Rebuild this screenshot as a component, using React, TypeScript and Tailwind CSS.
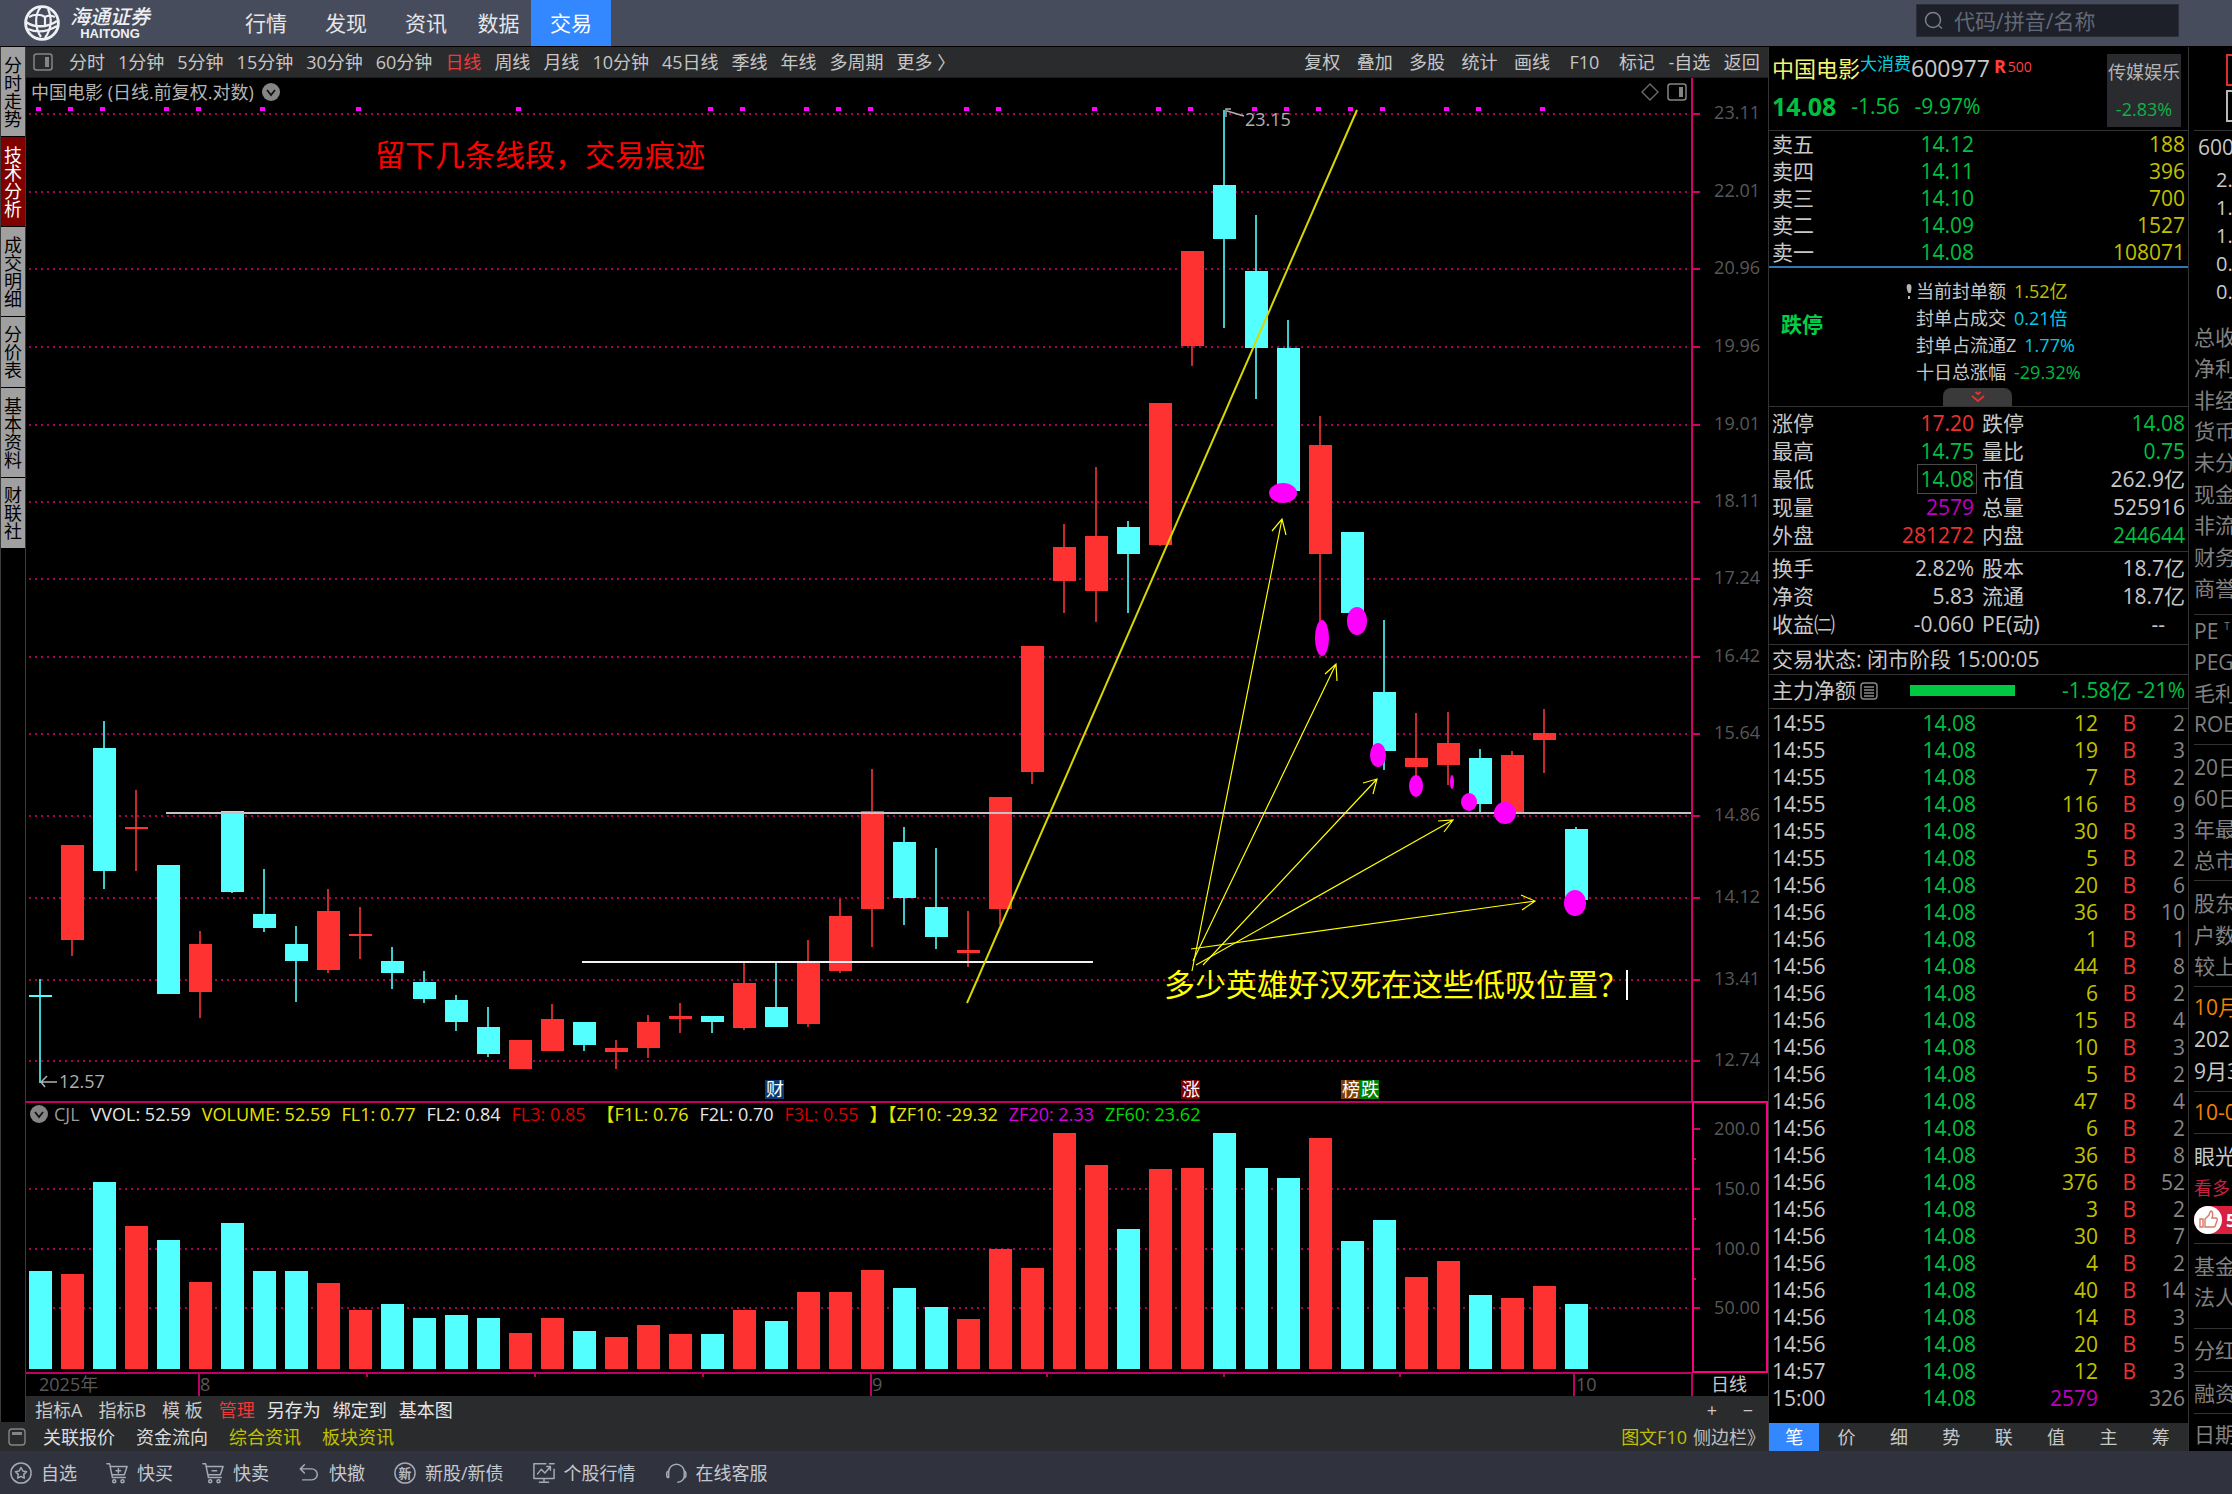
import type { ReactNode } from "react";
import clsx from "clsx";

type Tone = "up" | "down";

/** [tone, high, bodyTop, bodyBottom, low, volumeTop] */
type Bar = [Tone, number, number, number, number, number];

const bars: Bar[] = [
  ["down", 979, 995, 997, 1083, 1271],
  ["up", 845, 845, 940, 956, 1274],
  ["down", 721, 748, 871, 889, 1182],
  ["up", 790, 827, 829, 871, 1226],
  ["down", 865, 865, 994, 994, 1240],
  ["up", 931, 944, 992, 1018, 1282],
  ["down", 811, 811, 892, 893, 1223],
  ["down", 869, 914, 928, 932, 1271],
  ["down", 926, 944, 961, 1002, 1271],
  ["up", 889, 911, 970, 973, 1283],
  ["up", 907, 934, 936, 959, 1310],
  ["down", 947, 961, 973, 989, 1304],
  ["down", 971, 982, 999, 1003, 1318],
  ["down", 995, 1000, 1022, 1031, 1315],
  ["down", 1007, 1027, 1054, 1057, 1318],
  ["up", 1040, 1040, 1069, 1069, 1333],
  ["up", 1004, 1019, 1051, 1051, 1318],
  ["down", 1022, 1022, 1045, 1051, 1331],
  ["up", 1040, 1048, 1052, 1069, 1337],
  ["up", 1015, 1022, 1048, 1058, 1325],
  ["up", 1003, 1016, 1019, 1033, 1334],
  ["down", 1016, 1016, 1022, 1033, 1334],
  ["up", 962, 983, 1028, 1030, 1310],
  ["down", 962, 1007, 1027, 1027, 1321],
  ["up", 940, 962, 1024, 1027, 1292],
  ["up", 899, 916, 971, 973, 1292],
  ["up", 769, 811, 909, 947, 1270],
  ["down", 827, 842, 898, 925, 1288],
  ["down", 848, 907, 937, 949, 1307],
  ["up", 911, 950, 953, 967, 1319],
  ["up", 797, 797, 909, 925, 1249],
  ["up", 646, 646, 772, 784, 1268],
  ["up", 524, 547, 581, 613, 1133],
  ["up", 467, 536, 591, 622, 1165],
  ["down", 521, 527, 554, 613, 1229],
  ["up", 403, 403, 545, 546, 1169],
  ["up", 251, 251, 346, 366, 1168],
  ["down", 110, 185, 239, 328, 1133],
  ["down", 215, 271, 348, 399, 1168],
  ["down", 320, 348, 491, 491, 1178],
  ["up", 416, 445, 554, 640, 1138],
  ["down", 532, 532, 613, 613, 1241],
  ["down", 620, 692, 751, 770, 1220],
  ["up", 713, 758, 767, 777, 1277],
  ["up", 712, 743, 765, 785, 1261],
  ["down", 749, 758, 804, 813, 1295],
  ["up", 751, 755, 813, 813, 1298],
  ["up", 709, 733, 740, 773, 1286],
  ["down", 827, 829, 900, 900, 1304],
];

const barX = (i: number) => 40 + i * 32;
const fill = { up: "#ff3232", down: "#54ffff" };
const wick = { up: "#c82a2a", down: "#40cccc" };

const priceGrid: [number, string][] = [
  [113, "23.11"],
  [191, "22.01"],
  [268, "20.96"],
  [346, "19.96"],
  [424, "19.01"],
  [501, "18.11"],
  [578, "17.24"],
  [656, "16.42"],
  [733, "15.64"],
  [815, "14.86"],
  [897, "14.12"],
  [979, "13.41"],
  [1060, "12.74"],
];

const volumeGrid: [number, string][] = [
  [1129, "200.0"],
  [1189, "150.0"],
  [1249, "100.0"],
  [1308, "50.00"],
];

const eventDots = [0, 1, 2, 4, 5, 7, 10, 15, 21, 22, 24, 25, 26, 29, 30, 33, 35, 36, 38, 39, 40, 41, 42, 44, 45, 47];

/** cx, cy, rx, ry */
const lowMarks = [
  [1283, 493, 14, 10],
  [1322, 638, 7, 18],
  [1357, 621, 10, 14],
  [1378, 755, 8, 12],
  [1416, 786, 7, 11],
  [1452, 782, 2, 7],
  [1469, 802, 8, 9],
  [1505, 813, 11, 11],
  [1575, 903, 11, 13],
];

const arrows = [
  "M1192 971 1282 519M1272 531 1282 519 1286 535",
  "M1193 961 1336 664M1325 674 1336 664 1337 681",
  "M1203 965 1377 779M1363 783 1377 779 1373 794",
  "M1196 965 1453 820M1438 821 1453 820 1444 832",
  "M1191 949 1535 901M1521 895 1535 901 1522 910",
];

const eventTags = [
  { x: 765, text: "财", color: "#0a3a70" },
  { x: 1181, text: "涨", color: "#7d0000" },
  { x: 1341, text: "榜", color: "#803c00" },
  { x: 1360, text: "跌", color: "#008000" },
];

const navItems = ["行情", "发现", "资讯", "数据", "交易"];
const periods = ["分时", "1分钟", "5分钟", "15分钟", "30分钟", "60分钟", "日线", "周线", "月线", "10分钟", "45日线", "季线", "年线", "多周期", "更多 〉"];
const chartTools = ["复权", "叠加", "多股", "统计", "画线", "F10", "标记", "-自选", "返回"];
const sideTabs = ["分时走势", "技术分析", "成交明细", "分价表", "基本资料", "财联社"];
const quoteTabs = ["笔", "价", "细", "势", "联", "值", "主", "筹"];

const legend: [string, string][] = [
  ["CJL", "text-[#9a9a9a]"],
  ["VVOL: 52.59", "text-[#e6e6e6]"],
  ["VOLUME: 52.59", "text-[#e6e600]"],
  ["FL1: 0.77", "text-[#e6e600]"],
  ["FL2: 0.84", "text-[#e6e6e6]"],
  ["FL3: 0.85", "text-[#d80000]"],
  ["【F1L: 0.76", "text-[#e6e600]"],
  ["F2L: 0.70", "text-[#e6e6e6]"],
  ["F3L: 0.55", "text-[#d80000]"],
  ["】【ZF10: -29.32", "text-[#e6e600]"],
  ["ZF20: 2.33", "text-[#d800d8]"],
  ["ZF60: 23.62", "text-[#00d800]"],
];

const asks: [string, string, string][] = [
  ["卖五", "14.12", "188"],
  ["卖四", "14.11", "396"],
  ["卖三", "14.10", "700"],
  ["卖二", "14.09", "1527"],
  ["卖一", "14.08", "108071"],
];

const sealInfo: [string, string, string][] = [
  ["当前封单额", "1.52亿", "text-[#c0c000]"],
  ["封单占成交", "0.21倍", "text-[#00c8e8]"],
  ["封单占流通Z", "1.77%", "text-[#00c8e8]"],
  ["十日总涨幅", "-29.32%", "text-[#00b840]"],
];

const G = "text-[#00c040]";
const R = "text-[#f03030]";
const W = "text-[#c8c8c8]";

const stats: string[][] = [
  ["涨停", "17.20", R, "跌停", "14.08", G],
  ["最高", "14.75", G, "量比", "0.75", G],
  ["最低", "14.08", G, "市值", "262.9亿", W],
  ["现量", "2579", "text-[#c000c0]", "总量", "525916", W],
  ["外盘", "281272", R, "内盘", "244644", G],
];

const fundamentals: string[][] = [
  ["换手", "2.82%", W, "股本", "18.7亿", W],
  ["净资", "5.83", W, "流通", "18.7亿", W],
  ["收益㈡", "-0.060", W, "PE(动)", "--", W],
];

const ticks: [string, number, number][] = [
  ["14:55", 12, 2],
  ["14:55", 19, 3],
  ["14:55", 7, 2],
  ["14:55", 116, 9],
  ["14:55", 30, 3],
  ["14:55", 5, 2],
  ["14:56", 20, 6],
  ["14:56", 36, 10],
  ["14:56", 1, 1],
  ["14:56", 44, 8],
  ["14:56", 6, 2],
  ["14:56", 15, 4],
  ["14:56", 10, 3],
  ["14:56", 5, 2],
  ["14:56", 47, 4],
  ["14:56", 6, 2],
  ["14:56", 36, 8],
  ["14:56", 376, 52],
  ["14:56", 3, 2],
  ["14:56", 30, 7],
  ["14:56", 4, 2],
  ["14:56", 40, 14],
  ["14:56", 14, 3],
  ["14:56", 20, 5],
  ["14:57", 12, 3],
  ["15:00", 2579, 326],
];

function Logo() {
  return (
    <div className="flex w-[226px] items-center gap-[10px] pl-6">
      <svg viewBox="0 0 36 36" className="size-9" fill="none" stroke="#eef0f4" strokeWidth="2.2">
        <circle cx="18" cy="18" r="16.4" strokeWidth="2.8" />
        <path d="M17 2c-6 6-7 20 0 30M24 4c4 9 4 19-3 29M2 17c8 6 21 6 31-1M4 24c9 4 19 3 29-3" />
        <path d="M5 12c5-3 12-3 16 0v9M31 12c-4-2-7-2-10 0M12 21h10" />
      </svg>
      <div className="flex flex-col items-center text-[#eef0f4]">
        <span className="text-[20px] font-medium italic leading-[21px]">海通证券</span>
        <span className="font-['Liberation_Sans',sans-serif] text-[13px] font-bold leading-[13px]">HAITONG</span>
      </div>
    </div>
  );
}

function TopBar() {
  return (
    <header className="flex h-[47px] items-stretch border-b border-black bg-[#464c5b]">
      <Logo />
      <nav className="flex text-[21px] leading-[46px] text-[#e4e6ea]">
        {navItems.map((item) => (
          <button
            key={item}
            className={clsx(
              item === "数据" ? "w-[65px]" : "w-20",
              item === "交易" && "bg-[#3388ff] text-white",
            )}
          >
            {item}
          </button>
        ))}
      </nav>
      <label className="ml-auto mr-[53px] mt-1 flex h-[33px] w-[263px] items-center gap-[10px] border border-[#2a2e39] bg-[#1d2029] pl-[7px]">
        <svg viewBox="0 0 20 20" className="size-5 shrink-0" fill="none" stroke="#7a808c" strokeWidth="1.5">
          <circle cx="9" cy="9" r="7.5" />
          <path d="m14.5 14.5 3.5 3" />
        </svg>
        <input
          aria-label="搜索"
          placeholder="代码/拼音/名称"
          className="w-full min-w-0 bg-transparent text-[21px] leading-[30px] outline-none placeholder:text-[#626976]"
        />
      </label>
    </header>
  );
}

function PanelIcon() {
  return (
    <svg viewBox="0 0 20 18" className="h-[18px] w-5" fill="none" stroke="#858585" strokeWidth="1.5">
      <rect x="1" y="1" width="18" height="16" rx="2.5" />
      <path d="M14 4v10" strokeWidth="4" />
    </svg>
  );
}

function ChevronBadge() {
  return (
    <svg viewBox="0 0 18 18" className="size-[18px]">
      <circle cx="9" cy="9" r="9" fill="#858585" />
      <path d="m5 7 4 5 4-5" fill="none" stroke="#111" strokeWidth="1.8" />
    </svg>
  );
}

function ChartToolbar() {
  return (
    <div className="flex h-[31px] items-center border-b border-[#1c1c1c] bg-[#2a2b2d] pl-[7px] text-[18px] leading-[30px] text-[#c6c6c6]">
      <button aria-label="侧栏">
        <PanelIcon />
      </button>
      <div className="flex gap-[13px] whitespace-nowrap pl-4">
        {periods.map((p) => (
          <button key={p} className={clsx(p === "日线" && "text-[#f03838]")}>
            {p}
          </button>
        ))}
      </div>
      <div className="ml-auto grid w-[472px] grid-cols-9 whitespace-nowrap">
        {chartTools.map((t) => (
          <button key={t}>{t}</button>
        ))}
      </div>
    </div>
  );
}

function GridLine({ y }: { y: number }) {
  return <line x1="29" x2="1691" y1={y + 1} y2={y + 1} stroke="#a80058" strokeWidth="2" strokeDasharray="2 4" />;
}

/** Daily candles on a log price axis, with the hand-drawn annotations over them. */
function PriceChart() {
  return (
    <div className="relative">
      <svg viewBox="26 78 1742 1023" className="block h-auto w-full">
        {priceGrid.map(([y, label]) => (
          <g key={label}>
            <GridLine y={y} />
            <rect x="1692" y={y} width="8" height="2" fill="#d4006a" />
            <text x="1760" y={y + 6} textAnchor="end" className="fill-[#585858] text-[18px]">
              {label}
            </text>
          </g>
        ))}
        <rect x="1691" y="78" width="2" height="1023" fill="#d4006a" />
        {eventDots.map((i) => (
          <rect key={i} x={barX(i) - 4} y="107" width="5" height="4" fill="#ff00ff" />
        ))}
        {bars.map(([tone, high, top, bottom, low], i) => (
          <g key={i}>
            <rect x={barX(i) - 1} y={high} width="2" height={low - high} fill={wick[tone]} />
            <rect x={barX(i) - 11} y={top} width="23" height={bottom - top} fill={fill[tone]} />
          </g>
        ))}
        <rect x="166" y="812" width="1525" height="2" fill="#c8c0c8" />
        <rect x="582" y="961" width="511" height="2" fill="#f4f0f4" />
        <path d="M1357 110 967 1003" stroke="#d8d800" strokeWidth="2" />
        {arrows.map((d) => (
          <path key={d} d={d} fill="none" stroke="#ffff00" strokeWidth="1.2" />
        ))}
        {lowMarks.map(([cx, cy, rx, ry]) => (
          <ellipse key={cx} cx={cx} cy={cy} rx={rx} ry={ry} fill="#ff00ff" />
        ))}
        <path d="M1244 116 1227 111M1231 109h-5v8" fill="none" stroke="#b0b0b0" strokeWidth="1.5" />
        <text x="1245" y="126" className="fill-[#b0b0b0] text-[18px]">
          23.15
        </text>
        <path d="M57 1082H41M47 1076l-6 6 4 5" fill="none" stroke="#b0b0b0" strokeWidth="1.5" />
        <text x="59" y="1088" className="fill-[#b0b0b0] text-[18px]">
          12.57
        </text>
        <text x="375" y="166" className="fill-[#ff0000] text-[30px]">
          留下几条线段，交易痕迹
        </text>
        <text x="1164" y="996" className="fill-[#ffff00] text-[31px]">
          多少英雄好汉死在这些低吸位置？
        </text>
        <rect x="1626" y="970" width="2" height="30" fill="#ffffff" />
        {eventTags.map((t) => (
          <g key={t.text}>
            <rect x={t.x} y="1080" width="19" height="19" fill={t.color} />
            <text x={t.x + 1} y="1096" className="fill-white text-[18px]">
              {t.text}
            </text>
          </g>
        ))}
      </svg>
      <div className="absolute inset-x-0 top-0 flex h-7 items-center gap-2 pl-[5px] pr-[81px] text-[18px] text-[#b4b4b4]">
        <span>中国电影 (日线.前复权.对数)</span>
        <button aria-label="展开">
          <ChevronBadge />
        </button>
        <svg viewBox="0 0 18 18" className="ml-auto size-[18px]" fill="none" stroke="#6a6a6a" strokeWidth="1.4">
          <path d="m9 1 8 8-8 8-8-8z" />
        </svg>
        <PanelIcon />
      </div>
    </div>
  );
}

function VolumeChart() {
  return (
    <div className="relative">
      <svg viewBox="26 1101 1742 295" className="block h-auto w-full">
        {volumeGrid.map(([y, label], i) => (
          <g key={label}>
            {i > 0 && <GridLine y={y - 1} />}
            <rect x="1692" y={y - 1} width="8" height="2" fill="#d4006a" />
            {i < 3 && <rect x="1692" y={y + 29} width="4" height="2" fill="#d4006a" />}
            <text x="1760" y={y + 6} textAnchor="end" className="fill-[#585858] text-[18px]">
              {label}
            </text>
          </g>
        ))}
        {bars.map(([tone, , , , , top], i) => (
          <rect key={i} x={barX(i) - 11} y={top} width="23" height={1369 - top} fill={fill[tone]} />
        ))}
        <rect x="26" y="1101" width="1666" height="2" fill="#c00064" />
        <rect x="26" y="1372" width="1666" height="2" fill="#c00064" />
        <rect x="1693" y="1102" width="74" height="270" fill="none" stroke="#ff0080" strokeWidth="2" />
        <rect x="1691" y="1372" width="2" height="24" fill="#c00064" />
        {[199, 871, 1574].map((x) => (
          <rect key={x} x={x - 1} y="1373" width="2" height="23" fill="#c00064" />
        ))}
        {[366, 534, 702, 1046, 1223, 1399].map((x) => (
          <rect key={x} x={x} y="1373" width="2" height="4" fill="#c00064" />
        ))}
        <g className="fill-[#585858] text-[18px]">
          <text x="39" y="1391">2025年</text>
          <text x="200" y="1391">8</text>
          <text x="872" y="1391">9</text>
          <text x="1576" y="1391">10</text>
        </g>
        <text x="1711" y="1391" className="fill-[#c8c8c8] text-[18px]">
          日线
        </text>
      </svg>
      <div className="absolute left-1 top-0 flex h-[25px] items-center gap-[11px] whitespace-nowrap text-[18px] leading-6">
        <span className="flex items-center gap-[6px]">
          <ChevronBadge />
          <span className={legend[0][1]}>{legend[0][0]}</span>
        </span>
        {legend.slice(1).map(([text, color]) => (
          <span key={text} className={color}>
            {text}
          </span>
        ))}
      </div>
    </div>
  );
}

function SideTabs() {
  return (
    <nav className="flex w-[26px] shrink-0 flex-col gap-px border-x border-[#3a3a3a]">
      {sideTabs.map((tab) => (
        <button
          key={tab}
          className={clsx(
            "flex items-center justify-center pr-[2px] text-[18px] leading-6 [writing-mode:vertical-rl]",
            tab.length === 4 ? "h-[89px]" : "h-[70px]",
            tab === "技术分析" ? "bg-[#800000] text-white" : "bg-[#a0a0a0] text-black",
          )}
        >
          {tab}
        </button>
      ))}
    </nav>
  );
}

function IndicatorBar() {
  return (
    <div className="flex h-[26px] items-center gap-3 bg-[#2a2b2d] pl-[9px] pr-2 pt-px text-[18px] leading-[26px] text-[#c8c8c8]">
      <button>指标A</button>
      <button className="ml-1">指标B</button>
      <button className="ml-1">模 板</button>
      <button className="ml-1 text-[#f03838]">管理</button>
      <button className="text-[#e4e4e4]">另存为</button>
      <button className="text-[#e4e4e4]">绑定到</button>
      <button className="text-[#e4e4e4]">基本图</button>
      <button className="ml-auto w-6" aria-label="放大">+</button>
      <button className="w-6" aria-label="缩小">−</button>
    </div>
  );
}

function LinkBar() {
  return (
    <div className="flex h-[29px] items-center gap-[21px] bg-[#2a2b2d] pl-2 pr-[3px] pt-px text-[18px] leading-[28px] text-[#dcdcdc]">
      <svg viewBox="0 0 18 18" className="-mr-1 size-[18px]" fill="none" stroke="#858585" strokeWidth="1.4">
        <rect x="1" y="1" width="16" height="16" rx="3" />
        <path d="M4 5.5h10" strokeWidth="3" />
      </svg>
      <button>关联报价</button>
      <button>资金流向</button>
      <button className="text-[#c0c000]">综合资讯</button>
      <button className="text-[#c0c000]">板块资讯</button>
      <div className="ml-auto flex gap-[6px] whitespace-nowrap">
        <button className="text-[#c0c000]">图文F10</button>
        <button className="text-[#c0c0c0]">侧边栏》</button>
      </div>
    </div>
  );
}

function StatTable({ rows }: { rows: string[][] }) {
  return (
    <table className="w-full table-fixed">
      <colgroup>
        <col className="w-[76px]" />
        <col className="w-[126px]" />
        <col className="w-[90px]" />
        <col />
      </colgroup>
      <tbody>
        {rows.map(([a, av, ac, b, bv, bc]) => (
          <tr key={a} className="h-7 leading-7">
            <th className="text-left font-normal">{a}</th>
            <td className={clsx("text-right", ac)}>
              {a === "最低" ? (
                <span className="inline-block leading-[24px] outline outline-offset-2 outline-[#4a4a4a]">{av}</span>
              ) : (
                av
              )}
            </td>
            <th className="pl-2 text-left font-normal">{b}</th>
            <td className={clsx("text-right", bc, bv === "--" && "pr-5")}>{bv}</td>
          </tr>
        ))}
      </tbody>
    </table>
  );
}

function QuoteHeader() {
  return (
    <div className="flex h-[84px] justify-between border-b border-[#333] pl-[3px] pr-[7px]">
      <div>
        <div className="flex h-[42px] items-center whitespace-nowrap">
          <span className="text-[22px] text-[#f4f470]">中国电影</span>
          <span className="pb-2 text-[17px] text-[#00d0e0]">大消费</span>
          <span className="text-[23px] text-[#c8c8c8]">600977</span>
          <span className="pb-1 pl-1 text-[18px] font-bold text-[#ff4040]">R</span>
          <span className="pb-1 pl-[2px] text-[14px] text-[#ff4040]">500</span>
        </div>
        <div className="flex h-[36px] items-center gap-[15px] text-[#00c040]">
          <strong className="text-[25px]">14.08</strong>
          <span>-1.56</span>
          <span>-9.97%</span>
        </div>
      </div>
      <div className="mt-[7px] flex h-[73px] w-[74px] flex-col items-center justify-between whitespace-nowrap bg-[#2a2b2e] py-1 text-[18px] leading-[28px]">
        <span className="text-[#b4b4b4]">传媒娱乐</span>
        <span className="text-[#10b048]">-2.83%</span>
      </div>
    </div>
  );
}

function SealPanel() {
  return (
    <div className="relative flex h-[139px] items-start border-b border-[#333] pt-[10px] text-[18px] leading-[27px]">
      <strong className="ml-3 mt-[33px] w-[125px] text-[21px] text-[#00d048]">跌停</strong>
      <svg viewBox="0 0 6 16" className="mr-1 mt-[6px] h-4 w-[6px]" fill="#b4b4b4">
        <path d="M3 0c3 0 3 4 1.6 9H2.4C0 4 0 0 3 0zM2 12h2v3H2z" />
      </svg>
      <ul>
        {sealInfo.map(([label, value, color]) => (
          <li key={label} className="flex gap-2">
            <span>{label}</span>
            <span className={color}>{value}</span>
          </li>
        ))}
      </ul>
      <button
        aria-label="收起"
        className="absolute bottom-0 left-[174px] flex h-[18px] w-[69px] items-center justify-center rounded-t-lg bg-[#3a3a3a]"
      >
        <svg viewBox="0 0 14 12" className="h-3 w-[14px]" fill="none" stroke="#e83030" strokeWidth="1.8">
          <path d="m4.5 1 2.5 2 2.5-2M1 5l6 5 6-5" />
        </svg>
      </button>
    </div>
  );
}

function QuotePanel() {
  return (
    <aside className="flex w-[421px] shrink-0 flex-col border-x border-[#333] text-[21px] text-[#c8c8c8]">
      <QuoteHeader />
      <table className="mx-[3px] table-fixed">
        <colgroup>
          <col className="w-[76px]" />
          <col className="w-[126px]" />
          <col />
        </colgroup>
        <tbody>
          {asks.map(([label, price, volume]) => (
            <tr key={label} className="h-[27px] leading-[27px]">
              <th className="text-left font-normal">{label}</th>
              <td className="text-right text-[#00c040]">{price}</td>
              <td className="text-right text-[#c0c000]">{volume}</td>
            </tr>
          ))}
        </tbody>
      </table>
      <div className="h-[2px] bg-[#2f78b8]" />
      <SealPanel />
      <div className="border-b border-[#333] px-[3px] pb-[2px] pt-[2px]">
        <StatTable rows={stats} />
      </div>
      <div className="border-b border-[#333] px-[3px] pb-[6px] pt-[2px]">
        <StatTable rows={fundamentals} />
      </div>
      <p className="border-b border-[#333] px-[3px] leading-[29px]">交易状态: 闭市阶段 15:00:05</p>
      <div className="flex h-[34px] items-center border-b border-[#333] px-[3px] pb-[2px]">
        <span>主力净额</span>
        <svg viewBox="0 0 18 18" className="ml-1 size-[18px]" fill="none" stroke="#8a8a8a" strokeWidth="1.4">
          <rect x="1" y="1" width="16" height="16" rx="3" />
          <path d="M4 5h10M4 8h10M4 11h10M4 14h10" />
        </svg>
        <div className="ml-8 h-[11px] w-[105px] bg-[#00c840]" />
        <span className="ml-auto text-[#00c040]">-1.58亿 -21%</span>
      </div>
      <table className="mx-[3px] mt-px table-fixed">
        <colgroup>
          <col className="w-[78px]" />
          <col className="w-[126px]" />
          <col className="w-[122px]" />
          <col className="w-[38px]" />
          <col />
        </colgroup>
        <tbody>
          {ticks.map(([time, volume, count], i) => (
            <tr key={i} className="h-[27px] text-right leading-[27px]">
              <td className="text-left">{time}</td>
              <td className="text-[#00c040]">14.08</td>
              <td className={volume > 1000 ? "text-[#c000c0]" : "text-[#c0c000]"}>{volume}</td>
              <td className="text-[#f03030]">{time === "15:00" ? "" : "B"}</td>
              <td className="text-[#858585]">{count}</td>
            </tr>
          ))}
        </tbody>
      </table>
      <div className="mt-auto grid h-[28px] grid-cols-8 bg-[#2a2b2d] text-[18px] leading-[27px]">
        {quoteTabs.map((t) => (
          <button key={t} className={clsx("mr-[2px]", t === "笔" && "bg-[#3388ff] text-white")}>
            {t}
          </button>
        ))}
      </div>
    </aside>
  );
}

function StripGroup({ rows, className }: { rows: ReactNode[]; className: string }) {
  return (
    <ul className={clsx("flex flex-col border-b border-[#333]", className)}>
      {rows.map((row, i) => (
        <li key={i} className="flex flex-1 items-center">
          {row}
        </li>
      ))}
    </ul>
  );
}

function InfoStrip() {
  return (
    <aside className="w-[43px] shrink-0 overflow-hidden whitespace-nowrap pl-[5px] text-[21px] leading-7 text-[#808080]">
      <div className="flex h-[84px] flex-col items-end gap-1 border-b border-[#333] pt-[7px]">
        <span className="h-8 w-[6px] border-2 border-r-0 border-[#d83030]" />
        <span className="h-8 w-[6px] border-2 border-r-0 border-[#b8b8b8]" />
      </div>
      <p className="pl-1 pt-[2px] text-[#c8c8c8]">600</p>
      <ul className="mt-[5px] pl-[22px] text-[20px] text-[#c8c8c8]">
        {["2.", "1.", "1.", "0.", "0."].map((v, i) => (
          <li key={i}>{v}</li>
        ))}
      </ul>
      <StripGroup
        className="h-[309px] pb-[10px] pt-[15px]"
        rows={["总收", "净利", "非经", "货币", "未分", "现金", "非流", "财务", "商誉"]}
      />
      <StripGroup
        className="h-[130px] pb-1"
        rows={[
          <>
            PE <sup className="pl-[6px] text-[10px]">T</sup>
          </>,
          "PEG",
          "毛利",
          "ROE",
        ]}
      />
      <StripGroup className="h-[136px] pb-1 pt-[6px]" rows={["20日", "60日", "年最", "总市"]} />
      <StripGroup className="h-[106px] pb-1 pt-[6px]" rows={["股东", "户数", "较上"]} />
      <div className="flex h-[105px] flex-col justify-around border-b border-[#333] py-1 text-[#c8c8c8]">
        <span className="text-[#f08000]">10月</span>
        <span>202</span>
        <span>9月3</span>
      </div>
      <p className="border-b border-[#333] leading-[41px] text-[#f08000]">10-0</p>
      <div className="flex h-[110px] flex-col gap-[5px] border-b border-[#333] pt-2 text-[#c8c8c8]">
        <span>眼光</span>
        <span className="text-[18px] leading-[26px] text-[#c82040]">看多</span>
        <span className="flex h-7 items-center gap-1 rounded-l-full bg-[#d82040] text-[18px] font-bold text-white">
          <svg viewBox="0 0 28 28" className="size-7 shrink-0">
            <circle cx="14" cy="14" r="14" fill="#fff" />
            <path
              d="M6 13h3v8H6zM11 21v-8l4-4c1-3 1-4 2-4 2 0 2 4 1 7h4c1 0 1.5 1 1.2 2l-2 6c-.2.6-.6 1-1.2 1z"
              fill="none"
              stroke="#d87868"
              strokeWidth="1.4"
            />
          </svg>
          5
        </span>
      </div>
      <StripGroup className="h-[85px] pb-4 pt-[6px]" rows={["基金", "法人"]} />
      <StripGroup className="h-[43px]" rows={["分红"]} />
      <StripGroup className="h-[42px]" rows={["融资"]} />
      <p className="pt-[6px]">日期</p>
    </aside>
  );
}

function FooterItem({ label, children }: { label: string; children: ReactNode }) {
  return (
    <button className="flex items-center gap-[9px]">
      <svg
        viewBox="0 0 24 24"
        className="size-[22px]"
        fill="none"
        stroke="#a4aab6"
        strokeWidth="1.6"
        strokeLinecap="round"
        strokeLinejoin="round"
      >
        {children}
      </svg>
      {label}
    </button>
  );
}

function Cart({ sign }: { sign: string }) {
  return (
    <>
      <path d="M1 2h3l3 15h14M5 5h18l-3 9H7" />
      <path d={sign} />
      <circle cx="9" cy="21" r="1.7" />
      <circle cx="18" cy="21" r="1.7" />
    </>
  );
}

function Footer() {
  return (
    <footer className="flex h-[43px] items-center gap-[29px] bg-[#30333e] pl-[10px] pt-px text-[18px] text-[#c4c8d0]">
      <FooterItem label="自选">
        <circle cx="12" cy="12" r="11" />
        <path d="m12 6 2 3.8 4 .7-3 3 .6 4.2-3.6-2-3.6 2 .6-4.2-3-3 4-.7z" />
      </FooterItem>
      <FooterItem label="快买">
        <Cart sign="M13.5 7v5M11 9.5h5" />
      </FooterItem>
      <FooterItem label="快卖">
        <Cart sign="M11 9.5h5" />
      </FooterItem>
      <FooterItem label="快撤">
        <path d="M7 3 2.5 7.5 7 12M3 7.5h12a6 6 0 0 1 0 12H5" />
      </FooterItem>
      <FooterItem label="新股/新债">
        <circle cx="12" cy="12" r="11" />
        <text x="5" y="17" fontSize="14" fill="#b4b9c4" stroke="none" fontWeight="700">
          新
        </text>
      </FooterItem>
      <FooterItem label="个股行情">
        <path d="M14 2H1v16h22V8M23 2h-5M5 13l4-5 4 4 6-7M15 5h4v4M12 18v4M7 22h10" />
      </FooterItem>
      <FooterItem label="在线客服">
        <path d="M4 14v-3a8.5 8.5 0 0 1 17 0v4c0 4-3 7-7 7M4 10c-3 0-3 7 0 7zM21 10c2.5 0 2.5 7 0 7z" />
      </FooterItem>
    </footer>
  );
}

export default function App() {
  return (
    <div className="flex min-h-screen flex-col bg-black font-['Open_Sans','Noto_Sans_CJK_SC',sans-serif]">
      <TopBar />
      <main className="flex flex-1">
        <section className="flex min-w-0 flex-1 flex-col">
          <div className="flex flex-1">
            <SideTabs />
            <div className="min-w-0 flex-1">
              <ChartToolbar />
              <PriceChart />
              <VolumeChart />
              <IndicatorBar />
            </div>
          </div>
          <LinkBar />
        </section>
        <QuotePanel />
        <InfoStrip />
      </main>
      <Footer />
    </div>
  );
}
